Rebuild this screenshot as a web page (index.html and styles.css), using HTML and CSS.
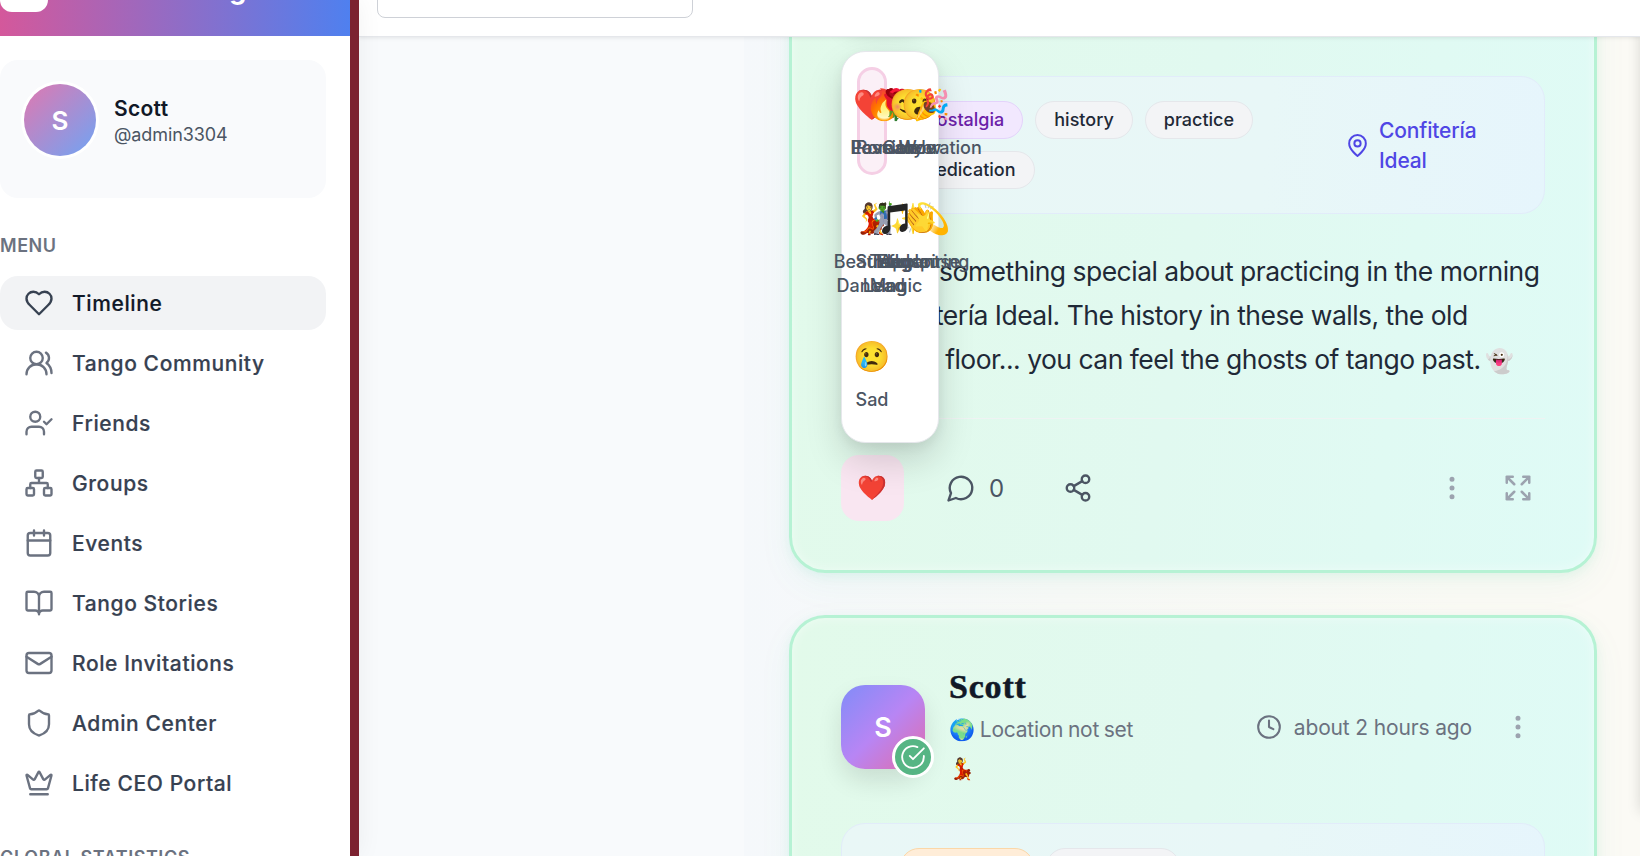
FILE: index.html
```html
<!DOCTYPE html>
<html lang="en">
<head>
<meta charset="utf-8">
<title>Timeline</title>
<link rel="stylesheet" href="styles.css">
</head>
<body>
<div class="app">
  <aside class="sidebar">
    <div class="brand"><span class="brand-logo"></span><span class="brand-name">Mundo Tango</span></div>
    <div class="profile">
      <div class="profile-avatar">S</div>
      <div class="profile-info"><div class="profile-name">Scott</div><div class="profile-handle">@admin3304</div></div>
    </div>
    <h2 class="side-title">MENU</h2>
    <nav class="menu">
      <a class="menu-item active"><svg class="icon" viewBox="0 0 24 24"><path d="M19 14c1.490-1.460 3-3.210 3-5.500A5.500 5.500 0 0 0 16.500 3c-1.760 0-3 .5-4.500 2-1.500-1.500-2.740-2-4.500-2A5.500 5.500 0 0 0 2 8.500c0 2.300 1.500 4.050 3 5.500l7 7Z"/></svg>Timeline</a>
      <a class="menu-item"><svg class="icon" viewBox="0 0 24 24"><path d="M18 21a8 8 0 0 0-16 0"/><circle cx="10" cy="8" r="5"/><path d="M22 20c0-3.370-2-6.500-4-8a5 5 0 0 0-.450-8.300"/></svg>Tango Community</a>
      <a class="menu-item"><svg class="icon" viewBox="0 0 24 24"><path d="M16 21v-2a4 4 0 0 0-4-4H6a4 4 0 0 0-4 4v2"/><circle cx="9" cy="7" r="4"/><path d="m16 11 2 2 4-4"/></svg>Friends</a>
      <a class="menu-item"><svg class="icon" viewBox="0 0 24 24"><rect x="16" y="16" width="6" height="6" rx="1"/><rect x="2" y="16" width="6" height="6" rx="1"/><rect x="9" y="2" width="6" height="6" rx="1"/><path d="M5 16v-3a1 1 0 0 1 1-1h12a1 1 0 0 1 1 1v3M12 12V8"/></svg>Groups</a>
      <a class="menu-item"><svg class="icon" viewBox="0 0 24 24"><path d="M8 2v4M16 2v4M3 10h18"/><rect x="3" y="4" width="18" height="18" rx="2"/></svg>Events</a>
      <a class="menu-item"><svg class="icon" viewBox="0 0 24 24"><path d="M12 7v14M3 18a1 1 0 0 1-1-1V4a1 1 0 0 1 1-1h5a4 4 0 0 1 4 4 4 4 0 0 1 4-4h5a1 1 0 0 1 1 1v13a1 1 0 0 1-1 1h-6a3 3 0 0 0-3 3 3 3 0 0 0-3-3z"/></svg>Tango Stories</a>
      <a class="menu-item"><svg class="icon" viewBox="0 0 24 24"><rect x="2" y="4" width="20" height="16" rx="2"/><path d="m22 7-8.970 5.700a1.940 1.940 0 0 1-2.060 0L2 7"/></svg>Role Invitations</a>
      <a class="menu-item"><svg class="icon" viewBox="0 0 24 24"><path d="M20 13c0 5-3.500 7.500-7.660 8.950a1 1 0 0 1-.670-.010C7.500 20.500 4 18 4 13V6a1 1 0 0 1 1-1c2 0 4.500-1.200 6.240-2.720a1.170 1.170 0 0 1 1.520 0C14.510 3.810 17 5 19 5a1 1 0 0 1 1 1z"/></svg>Admin Center</a>
      <a class="menu-item"><svg class="icon" viewBox="0 0 24 24"><path d="M11.562 3.266a.5.5 0 0 1 .876 0L15.390 8.870a1 1 0 0 0 1.516.294L21.183 5.500a.5.5 0 0 1 .798.519l-2.834 10.246a1 1 0 0 1-.956.734H5.810a1 1 0 0 1-.957-.734L2.020 6.020a.5.5 0 0 1 .798-.519l4.276 3.664a1 1 0 0 0 1.516-.294zM5 21h14"/></svg>Life CEO Portal</a>
    </nav>
    <h2 class="side-title stats-title">GLOBAL STATISTICS</h2>
  </aside>

  <div class="content">
    <header class="topbar"><div class="search"></div></header>
    <main class="feed">
      <article class="card">
        <div class="card-head">
          <div class="avatar">S</div>
        </div>
        <div class="panel">
          <div class="chips"><span class="chip purple">nostalgia</span><span class="chip">history</span><span class="chip">practice</span><span class="chip long">dedication</span></div>
          <div class="place"><svg class="icon pin" viewBox="0 0 24 24"><path d="M20 10c0 6-8 12-8 12s-8-6-8-12a8 8 0 0 1 16 0Z"/><circle cx="12" cy="10" r="3"/></svg><span>Confitería<br>Ideal</span></div>
        </div>
        <p class="post">There's something special about practicing in the morning<br>at Confitería Ideal. The history in these walls, the old<br>wooden floor... you can feel the ghosts of tango past. <span class="emo ghost">👻</span></p>
        <div class="actions">
          <div class="react">
            <span class="react-emoji">❤️</span>
            <div class="picker">
              <div class="option selected"><span class="face">❤️</span><span class="label">Love</span></div>
              <div class="option"><span class="face">🔥</span><span class="label">Passion</span></div>
              <div class="option"><span class="face">🌹</span><span class="label">Romance</span></div>
              <div class="option"><span class="face">😊</span><span class="label">Joy</span></div>
              <div class="option"><span class="face">😮</span><span class="label">Wow</span></div>
              <div class="option"><span class="face">🎉</span><span class="label">Celebration</span></div>
              <div class="option"><span class="face">💃</span><span class="label">Beautiful<br>Dancing</span></div>
              <div class="option"><span class="face suit">🕺</span><span class="label">Strong<br>Lead</span></div>
              <div class="option"><span class="face note">🎵</span><span class="label">Tango<br>Magic</span></div>
              <div class="option"><span class="face">✨</span><span class="label">Elegant</span></div>
              <div class="option"><span class="face">👏</span><span class="label">Applause</span></div>
              <div class="option"><span class="face">💫</span><span class="label">Inspiring</span></div>
              <div class="option"><span class="face">😢</span><span class="label">Sad</span></div>
            </div>
          </div>
          <div class="comment"><svg class="icon" viewBox="0 0 24 24"><path d="M7.900 20A9 9 0 1 0 4 16.100L2 22Z"/></svg>0</div>
          <svg class="icon share" viewBox="0 0 24 24"><circle cx="18" cy="5" r="3"/><circle cx="6" cy="12" r="3"/><circle cx="18" cy="19" r="3"/><path d="m8.590 13.510 6.830 3.980M15.410 6.510l-6.820 3.980"/></svg>
          <svg class="icon faint more" viewBox="0 0 24 24"><circle cx="12" cy="12" r="1"/><circle cx="12" cy="5" r="1"/><circle cx="12" cy="19" r="1"/></svg>
          <svg class="icon faint expand" viewBox="0 0 24 24"><path d="m15 15 6 6M15 9l6-6M21 16.200V21h-4.800M21 7.800V3h-4.800M3 16.200V21h4.800M3 21l6-6M3 7.800V3h4.800M9 9 3 3"/></svg>
        </div>
      </article>

      <article class="card">
        <div class="card-head">
          <div class="avatar">S<span class="badge"><svg class="icon" viewBox="0 0 24 24"><path d="M22 11.080V12a10 10 0 1 1-5.930-9.140"/><path d="m9 11 3 3L22 4"/></svg></span></div>
          <div class="author"><div class="author-name">Scott</div><div class="author-place"><span class="emo">🌍</span> Location not set</div><div class="author-role"><span class="emo">💃</span></div></div>
          <div class="time"><svg class="icon" viewBox="0 0 24 24"><circle cx="12" cy="12" r="10"/><path d="M12 6v6l4 2"/></svg>about 2 hours ago</div>
          <svg class="icon faint head-more" viewBox="0 0 24 24"><circle cx="12" cy="12" r="1"/><circle cx="12" cy="5" r="1"/><circle cx="12" cy="19" r="1"/></svg>
        </div>
        <div class="panel">
          <div class="chips"><span class="chip orange">excitement</span><span class="chip">community</span></div>
        </div>
      </article>
    </main>
    <div class="rail"></div>
  </div>
</div>
</body>
</html>
```

FILE: styles.css
```css
* { box-sizing: border-box; }
body { margin: 0; font-family: Inter, sans-serif; color: #1f2937; }
.app { display: flex; width: 1640px; height: 856px; overflow: hidden; background: #fff; }
.icon { width: 30px; height: 30px; flex: none; fill: none; stroke: currentColor; stroke-width: 1.9; stroke-linecap: round; stroke-linejoin: round; }
.emo { font-family: "Noto Color Emoji", sans-serif; letter-spacing: 0; line-height: 1; }

/* Sidebar */
.sidebar { width: 359px; height: 856px; flex: none; position: relative; z-index: 6; border-right: 9px solid #7c2230; background: #fff; overflow: hidden; box-shadow: 0 0 24px rgba(0,0,0,.06); }
.brand { height: 108px; margin-top: -72px; display: flex; align-items: center; gap: 18px; background: linear-gradient(90deg, #d4589b, #4f80ef); }
.brand-logo { width: 48px; height: 48px; margin-top: 12px; border-radius: 12px; background: #fff; }
.brand-name { margin: 15px 0 0 16px; font-size: 27px; font-weight: 700; line-height: 36px; color: #fff; }
.profile { width: 326px; height: 138px; margin-top: 24px; padding: 24px; display: flex; gap: 18px; border-radius: 18px; background: #f9fafc; }
.profile-avatar { width: 72px; height: 72px; border-radius: 50%; box-shadow: 0 0 0 3px #fff; display: grid; place-items: center; font-size: 26px; font-weight: 600; color: #fff; background: linear-gradient(135deg, #e078b0, #70a4f4); }
.profile-info { padding-top: 10px; }
.profile-name { font-size: 21px; line-height: 30px; font-weight: 600; letter-spacing: .3px; color: #111827; }
.profile-handle { font-size: 18px; line-height: 22px; letter-spacing: -.1px; color: #4b5563; }
.side-title { margin: 34px 0 0; font-size: 18px; line-height: 27px; font-weight: 600; letter-spacing: .55px; color: #6b7280; }
.menu { width: 326px; margin-top: 17px; display: flex; flex-direction: column; gap: 6px; }
.menu-item { height: 54px; display: flex; align-items: center; gap: 18px; padding-left: 24px; border-radius: 18px; font-size: 21px; font-weight: 500; letter-spacing: .6px; color: #374151; -webkit-text-stroke: .2px currentColor; }
.menu-item .icon { color: #6b7280; }
.menu-item.active { background: #f2f3f5; color: #111827; }
.menu-item.active .icon { color: #374151; }
.stats-title { margin-top: 34px; }

/* Content */
.content { flex: 1; position: relative; display: flex; flex-direction: column; background: linear-gradient(90deg, #f8fafc 0, #f8fafc 385px, #f5f8fb 385px, #f8f9f7 700px, #fbfaf5 1100px, #fbfaf5 100%); }
.topbar { height: 37px; flex: none; position: relative; z-index: 5; padding-left: 18px; background: #fff; border-bottom: 1px solid #e5e7eb; box-shadow: 0 1px 4px rgba(0,0,0,.09); }
.search { width: 316px; height: 58px; margin-top: -40px; border: 1px solid #ced1d7; border-radius: 8px; background: #fff; }
.feed { width: 808px; margin: -169px 0 0 430px; display: flex; flex-direction: column; gap: 42px; }
.rail { position: absolute; left: 1281px; top: 0; width: 20px; height: 812px; box-shadow: 0 0 14px rgba(0,0,0,.14); }

/* Cards */
.card { padding: 49px; border: 3px solid #b6f2d4; border-radius: 36px; background: linear-gradient(98deg, #e2faea, #e1f9f0 50%, #dffbf6); box-shadow: 0 12px 36px rgba(16,185,129,.05), 0 3px 12px rgba(16,185,129,.08), inset 0 0 12px rgba(255,255,255,.45); }
.card-head { height: 120px; margin-bottom: 36px; display: flex; align-items: center; }
.avatar { position: relative; width: 84px; height: 84px; flex: none; border-radius: 24px; display: grid; place-items: center; font-size: 27px; font-weight: 600; color: #fff; background: linear-gradient(135deg, #818cf8, #b885f4 50%, #e26ca8); box-shadow: 0 12px 24px rgba(0,0,0,.11); }
.badge { position: absolute; right: -9px; bottom: -9px; width: 42px; height: 42px; border: 3px solid #fff; border-radius: 50%; display: grid; place-items: center; background: #56b584; }
.badge .icon { width: 26px; height: 26px; stroke-width: 1.7; }
.author { margin-left: 24px; display: flex; flex-direction: column; }
.author-name { font-family: "Liberation Serif", serif; font-size: 34px; font-weight: 700; line-height: 42px; letter-spacing: .8px; -webkit-text-stroke: .5px #111827; color: #111827; }
.author-place, .author-role { font-size: 21px; line-height: 39px; letter-spacing: -.25px; color: #6b7280; white-space: nowrap; }
.author-place { margin-top: 2px; word-spacing: -1px; }
.time { margin-left: auto; display: flex; align-items: center; gap: 12px; font-size: 21px; letter-spacing: -.15px; color: #6b7280; }
.time .icon { width: 26px; height: 26px; }
.head-more { margin: 0 12px 0 31px; }
.faint { color: #9ca3af; stroke-width: 2; }
.panel { height: 138px; padding: 24px 24px 24px 58px; display: flex; align-items: center; border: 1px solid #e2ecfa; border-radius: 24px; background: linear-gradient(95deg, #e9f7f6, #e8f7f7 60%, #e6f5fc); }
.chips { width: 400px; align-self: flex-start; display: flex; flex-wrap: wrap; gap: 12px; }
.chip { height: 38px; padding: 0 18px 1px; display: flex; align-items: center; border: 1px solid #e5e7eb; border-radius: 19px; font-size: 18px; font-weight: 500; background: #f3f4f6; color: #1f2937; }
.chip.purple { padding-left: 25px; background: #f2e8fe; border-color: #e4d3fb; color: #6b21a8; }
.chip.long { padding-left: 24px; }
.chip.orange { padding-left: 19px; background: #ffedd8; border-color: #fbd7a8; color: #9a3412; }
.place { margin-left: auto; width: 175px; padding-top: 1px; display: flex; align-items: center; gap: 9px; font-size: 21px; line-height: 30px; font-weight: 500; letter-spacing: -.15px; color: #4f46e5; }
.icon.pin { width: 25px; height: 25px; }
.post { height: 133px; margin: 35px 0 36px; font-size: 26.5px; line-height: 44px; letter-spacing: -.52px; white-space: nowrap; color: #1f2937; }
.ghost { font-size: 23px; margin-left: -2px; }
.actions { border-top: 1px solid #eff3f3; padding-top: 36px; display: flex; align-items: center; color: #4b5563; }
.react { position: relative; width: 63px; height: 66px; border-radius: 18px; display: grid; place-items: center; background: #f9e6f1; }
.react-emoji { font-family: "Noto Color Emoji", sans-serif; font-size: 24px; }
.comment { margin-left: 42px; display: flex; align-items: center; gap: 13px; font-size: 24px; letter-spacing: -1px; }
.share { margin-left: 60px; }
.more { margin-left: auto; }
.expand { margin: 0 12px 0 36px; }

/* Reaction picker */
.picker { position: absolute; left: 0; bottom: 78px; z-index: 2; width: 98px; padding: 15px; display: grid; grid-template-columns: repeat(6, 12px); row-gap: 6px; border: 1px solid #e5e7eb; border-radius: 24px; background: #fff; box-shadow: 0 18px 36px rgba(0,0,0,.15), 0 4px 12px rgba(0,0,0,.06); }
.option { width: 30px; min-height: 108px; padding: 12px 0; border: 3px solid transparent; border-radius: 15px; display: flex; flex-direction: column; align-items: center; gap: 8px; }
.option.selected { border-color: #f5cfe5; background: #fbf0f7; }
.face { font-family: "Noto Color Emoji", sans-serif; font-size: 30px; line-height: 46px; height: 46px; }
.face.note { filter: grayscale(1) brightness(.35); }
.face.suit { filter: hue-rotate(50deg) brightness(.7); }
.label { font-size: 18px; line-height: 24px; font-weight: 500; text-align: center; color: #4b5563; }
```
